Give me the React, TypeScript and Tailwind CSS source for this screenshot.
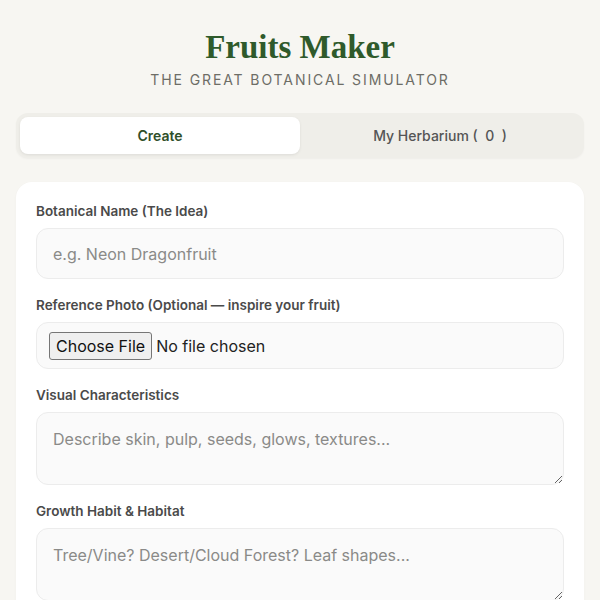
import { useState } from "react";

const fields = [
    { label: "Visual Characteristics", placeholder: "Describe skin, pulp, seeds, glows, textures..." },
    { label: "Growth Habit & Habitat", placeholder: "Tree/Vine? Desert/Cloud Forest? Leaf shapes..." },
];

export default function App() {
    const [tab, setTab] = useState<"create" | "herbarium">("create");
    const [name, setName] = useState("");

    return (
        <div className="min-h-screen bg-[#f7f6f2] px-4 pt-7 pb-10 font-['Inter',sans-serif]">
            <h1 className="text-center text-[33px] leading-[38px] font-bold text-[#2f5a2b] font-['Liberation_Serif','DejaVu_Serif',serif]">
                Fruits Maker
            </h1>
            <p className="mt-1 text-center text-[14px] leading-5 tracking-[1.9px] text-[#6d6d66]">
                THE GREAT BOTANICAL SIMULATOR
            </p>

            <div className="mt-[23px] flex rounded-xl bg-[#efeee9] p-1 shadow-[0_1px_2px_rgba(0,0,0,0.04)]">
                <button
                    onClick={() => setTab("create")}
                    className={`flex-1 h-[37px] rounded-lg text-[14px] font-semibold ${tab === "create" ? "bg-white text-[#2f4f2a] shadow-[0_1px_3px_rgba(0,0,0,0.08)]" : "text-[#555]"}`}
                >
                    Create
                </button>
                <button
                    onClick={() => setTab("herbarium")}
                    className={`flex-1 h-[37px] rounded-lg text-[14px] font-medium ${tab === "herbarium" ? "bg-white text-[#2f4f2a] shadow-[0_1px_3px_rgba(0,0,0,0.08)]" : "text-[#555]"}`}
                >
                    My Herbarium (&nbsp; 0 &nbsp;)
                </button>
            </div>

            <div className="mt-6 rounded-2xl bg-white px-5 pt-5 pb-6 shadow-[0_1px_3px_rgba(0,0,0,0.03)]">
                <label className="block mb-2 text-[13.5px] leading-[18px] font-semibold text-[#4a4a4a]">
                    Botanical Name (The Idea)
                </label>
                <input
                    value={name}
                    onChange={(e) => setName(e.target.value)}
                    placeholder="e.g. Neon Dragonfruit"
                    className="w-full h-[51px] rounded-xl border border-[#ececec] bg-[#fafafa] px-4 text-[16px] text-[#333] placeholder:text-[#8a8a88] focus:outline-none"
                />

                <label className="block mt-[17px] mb-2 text-[13.5px] leading-[18px] font-semibold text-[#4a4a4a]">
                    Reference Photo (Optional — inspire your fruit)
                </label>
                <div className="h-[47px] flex items-center rounded-xl border border-[#ececec] bg-[#fafafa] px-3">
                    <input type="file" className="text-[16px] text-[#222] file:mr-1 file:rounded-[3px] file:border file:border-[#767676] file:bg-[#efefef] file:px-[6px] file:py-[1px] file:text-[16px] file:text-[#111]" />
                </div>

                {fields.map((f) => (
                    <div key={f.label}>
                        <label className="block mt-[17px] mb-2 text-[13.5px] leading-[18px] font-semibold text-[#4a4a4a]">
                            {f.label}
                        </label>
                        <textarea
                            placeholder={f.placeholder}
                            className="block w-full h-[73px] rounded-xl border border-[#ececec] bg-[#fafafa] px-4 py-3.5 text-[16px] leading-6 text-[#333] placeholder:text-[#8a8a88] focus:outline-none"
                        />
                    </div>
                ))}
            </div>
        </div>
    );
}
